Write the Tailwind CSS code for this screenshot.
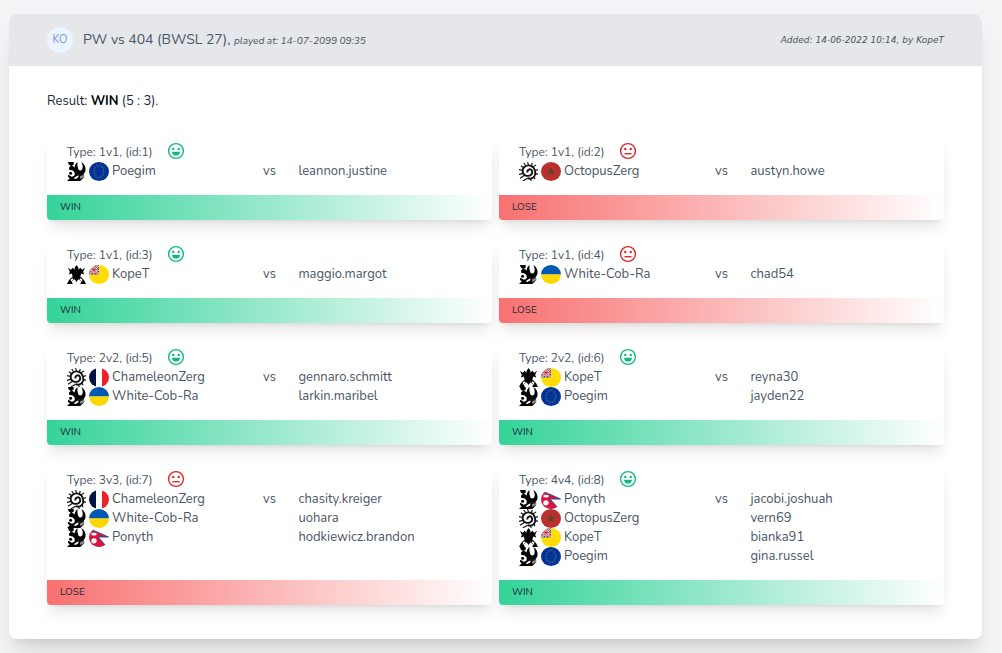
<!DOCTYPE html>
<html lang="en">
<head>
<meta charset="utf-8">
<meta name="viewport" content="width=device-width, initial-scale=1">
<title>PW vs 404 (BWSL 27)</title>
<script src="https://cdn.jsdelivr.net/npm/@tailwindcss/browser@4"></script>
</head>
<body class="min-h-screen bg-gray-100 font-['Nunito','Noto_Sans',sans-serif] text-sm text-gray-600">
<svg class="hidden" aria-hidden="true">
  <defs>
    <symbol id="terran" viewBox="0 0 20 20">
      <path d="M15 0Q20 3 19.500 9 18 14 14 13.500 9 13 8 8 7.500 3 11 0 10.500 5 12 8 14 10 16 8 17.500 4 15 0Z"/>
      <path d="M1 0H7V3L5 4Q9 5 9.500 9L12 13 18 13V16L14 20H0L3 17Q0 16 1.500 13.500L5 15.500Q9 15 8 11 6 8 2.500 8.500L2 6 4 4 2 3Z"/>
      <circle cx="3.800" cy="11.800" r="1.600"/>
      <path d="M10 15L12 14 12 16 9 18 7 17Z" fill="#fff"/>
      <path d="M13.500 15L18 13.500V16L14 18Z" fill="#888"/>
    </symbol>
    <symbol id="zerg" viewBox="0 0 20 20">
      <g fill="none" stroke="#111">
        <path d="M9 17C14 19 18 15 17 10 16 4 10 2 6 5 2 8 4 14 8 14.500 12 15.500 15 12 13.500 9 12 6.500 8 8 9 11" stroke-width="1.900"/>
        <path d="M5 6L2 4M7 4L5 1M10 3L9 0M13 4L14 1M15 5L18 3M17 9L20 8M17 12L20 13M15 15L17 18M4 9L0 8M4 12L0 13M6 14L1 17M9 17L4 20M12 18L13 20" stroke-width="1.200"/>
      </g>
    </symbol>
    <symbol id="protoss" viewBox="0 0 20 20">
      <path d="M10 0L12 3 12 5 14 3 16 5 19 3 17 7 18 10 15 9 14 12 16 14 18 16 20 20H14L15 17 12 15 10 18 8 15 5 17 6 20H0L2 16 4 14 6 12 5 9 2 10 3 7 1 3 4 5 6 3 8 5 8 3Z"/>
      <path d="M4 15L6 14 7 15 4 18ZM16 15L14 14 13 15 16 18Z" fill="#fff"/>
    </symbol>
    <symbol id="eu" viewBox="0 0 20 20">
      <path d="M0 0H20V20H0Z" fill="#039"/>
      <ellipse cx="10" cy="10" rx="4.7" ry="6.500" fill="none" stroke="#596d5c" stroke-width="1.3" stroke-dasharray="1.4 1.500"/>
    </symbol>
    <symbol id="morocco" viewBox="0 0 20 20">
      <path d="M0 0H20V20H0Z" fill="#b9302d"/>
      <path d="M10 5L11.2 8.5H14L11.8 10.7 13 14.5 10 12.2 7 14.5 8.2 10.7 6 8.5H8.8Z" fill="#624329"/>
    </symbol>
    <symbol id="niue" viewBox="0 0 20 20">
      <path d="M0 0H20V20H0Z" fill="#fedd00"/><path d="M0 0H10V10H0Z" fill="#33427c"/>
      <path d="M0 0L10 10M0 10L10 0M5 0V10M0 5H10" stroke="#fff" stroke-width="2"/>
      <path d="M0 0L10 10M0 10L10 0M5 0V10M0 5H10" stroke="#c8243b" stroke-width="1"/>
    </symbol>
    <symbol id="france" viewBox="0 0 20 20">
      <path d="M0 0H7V20H0Z" fill="#001443"/><path d="M7 0H13V20H7Z" fill="#fff"/><path d="M13 0H20V20H13Z" fill="#ee2028"/>
    </symbol>
    <symbol id="ukraine" viewBox="0 0 20 20">
      <path d="M0 0H20V10H0Z" fill="#0058b5"/><path d="M0 10H20V20H0Z" fill="#ffd700"/>
    </symbol>
    <symbol id="nepal" viewBox="0 0 20 20">
      <path d="M-1 0L19.500 9.5H9L18 20H-1Z" fill="#dc143c" stroke="#264a9b" stroke-width="1"/>
      <ellipse cx="5" cy="6.500" rx="2.800" ry="1.5" fill="#fff"/><circle cx="5" cy="13.500" r="2.7" fill="#fff"/>
    </symbol>
    <symbol id="happy" viewBox="0 0 18 18">
      <circle cx="9" cy="9" r="7.4" fill="none" stroke="currentColor" stroke-width="1.4"/>
      <circle cx="6.3" cy="6.9" r="1.2" fill="currentColor"/><circle cx="11.7" cy="6.9" r="1.2" fill="currentColor"/>
      <path d="M5 9.7H13Q12.5 13.6 9 13.6 5.500 13.6 5 9.7Z" fill="currentColor"/>
    </symbol>
    <symbol id="neutral" viewBox="0 0 18 18">
      <circle cx="9" cy="9" r="7.4" fill="none" stroke="currentColor" stroke-width="1.4"/>
      <circle cx="6.3" cy="7" r="1.2" fill="currentColor"/><circle cx="11.7" cy="7" r="1.2" fill="currentColor"/>
      <path d="M5.500 11.700H12.500" stroke="currentColor" stroke-width="1.4"/>
    </symbol>
  </defs>
</svg>

<div class="pt-[14px] pr-5 pb-[14px] pl-[9px]">
  <main class="rounded-lg bg-white shadow-xl">
    <header class="flex h-[52px] items-center justify-between rounded-t-lg bg-gray-200 px-[38px]">
      <div class="flex items-center gap-[10px]">
        <span class="flex size-[26px] items-center justify-center rounded-full bg-[#ebf4ff] text-[11px] text-[#8094ee]">KO</span>
        <h1 class="text-sm leading-5">PW vs 404 (BWSL 27), <em class="text-[10px]">played at: 14-07-2099 09:35</em></h1>
      </div>
      <em class="font-['DejaVu_Sans',sans-serif] text-[9px]">Added: 14-06-2022 10:14, by KopeT</em>
    </header>
    <div class="px-[38px] pt-[25px] pb-[34px]">
      <p class="mb-[26px] text-[13px] leading-5 text-gray-800">Result: <strong class="text-black">WIN</strong> (5 : 3).</p>
      <div id="games" class="grid grid-cols-2 gap-x-[7px] gap-y-5"></div>
    </div>
  </main>
</div>

<script>
const players = {
  Poegim: ['terran', 'eu'], OctopusZerg: ['zerg', 'morocco'], KopeT: ['protoss', 'niue'],
  'White-Cob-Ra': ['terran', 'ukraine'], ChameleonZerg: ['zerg', 'france'], Ponyth: ['terran', 'nepal']
};
const games = [
  [['Poegim'], ['leannon.justine'], true],
  [['OctopusZerg'], ['austyn.howe'], false],
  [['KopeT'], ['maggio.margot'], true],
  [['White-Cob-Ra'], ['chad54'], false],
  [['ChameleonZerg', 'White-Cob-Ra'], ['gennaro.schmitt', 'larkin.maribel'], true],
  [['KopeT', 'Poegim'], ['reyna30', 'jayden22'], true],
  [['ChameleonZerg', 'White-Cob-Ra', 'Ponyth'], ['chasity.kreiger', 'uohara', 'hodkiewicz.brandon'], false],
  [['Ponyth', 'OctopusZerg', 'KopeT', 'Poegim'], ['jacobi.joshuah', 'vern69', 'bianka91', 'gina.russel'], true]
];
document.getElementById('games').innerHTML = games.map(([home, away, win], i) => `
  <article class="flex flex-col rounded bg-white shadow-lg">
    <div class="grow px-5 pt-[5px] pb-[14px]">
      <div class="flex h-5 items-start gap-[15px] text-xs leading-5">
        <h2>Type: ${home.length}v${home.length}, (id:${i + 1})</h2>
        <svg class="size-[18px] ${win ? 'text-[#10b981]' : 'text-[#dc2626]'}"><use href="#${win ? 'happy' : 'neutral'}"/></svg>
      </div>
      <div class="grid grid-cols-7 text-[13px] leading-[19px]">
        <ul class="col-span-3">${home.map(n => `
          <li class="flex items-center gap-[3px] whitespace-nowrap">
            <svg class="size-[19px] shrink-0"><use href="#${players[n][0]}"/></svg>
            <svg class="h-[19px] w-5 shrink-0 rounded-[50%]" viewBox="0 0 20 20" preserveAspectRatio="none"><use href="#${players[n][1]}" width="20" height="20"/></svg>
            <span>${n}</span>
          </li>`).join('')}
        </ul>
        <span class="text-center">vs</span>
        <ul class="col-span-3">${away.map(n => `<li>${n}</li>`).join('')}</ul>
      </div>
    </div>
    <p class="rounded-b bg-linear-to-r/srgb px-[13px] text-[10px] leading-[25px] text-gray-800 ${win ? 'from-[#34d399]' : 'from-[#f87171]'} to-white">${win ? 'WIN' : 'LOSE'}</p>
  </article>`).join('');
</script>
</body>
</html>
